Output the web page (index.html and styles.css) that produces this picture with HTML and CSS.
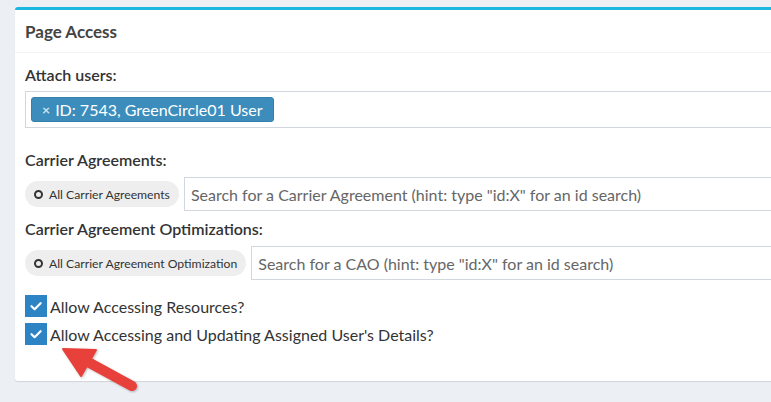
FILE: index.html
```html
<!DOCTYPE html>
<html>
<head>
<meta charset="utf-8">
<link rel="stylesheet" href="styles.css">
</head>
<body>
<div class="page">
  <section class="box">
    <header class="box-header"><h3 class="box-title">Page Access</h3></header>
    <div class="box-body">
      <div class="group">
        <label class="lbl">Attach users:</label>
        <div class="tagbox">
          <span class="tag"><span class="tag-x">×</span>ID: 7543, GreenCircle01 User</span>
        </div>
      </div>
      <div class="group g2">
        <label class="lbl">Carrier Agreements:</label>
        <div class="row">
          <span class="pill"><span class="ring"></span>All Carrier Agreements</span>
          <div class="search">Search for a Carrier Agreement (hint: type "id:X" for an id search)</div>
        </div>
      </div>
      <div class="group g3">
        <label class="lbl">Carrier Agreement Optimizations:</label>
        <div class="row">
          <span class="pill"><span class="ring"></span>All Carrier Agreement Optimization</span>
          <div class="search">Search for a CAO (hint: type "id:X" for an id search)</div>
        </div>
      </div>
      <div class="checks">
        <label class="check"><span class="cb"><svg viewBox="0 0 22 22" width="22" height="22"><path d="M6.5 11.2 L9.6 14.2 L15.6 8.2" fill="none" stroke="#fff" stroke-width="2.2" stroke-linecap="round" stroke-linejoin="round"/></svg></span>Allow Accessing Resources?</label>
        <label class="check"><span class="cb"><svg viewBox="0 0 22 22" width="22" height="22"><path d="M6.5 11.2 L9.6 14.2 L15.6 8.2" fill="none" stroke="#fff" stroke-width="2.2" stroke-linecap="round" stroke-linejoin="round"/></svg></span>Allow Accessing and Updating Assigned User's Details?</label>
      </div>
    </div>
  </section>
  <svg class="arrow" width="110" height="62" viewBox="50 340 110 62">
    <g fill="#e8403a" stroke="#e8403a" stroke-linejoin="round" stroke-linecap="round">
      <polygon points="63,349 96,350 81,376" stroke-width="2"/>
      <line x1="88" y1="362" x2="132" y2="386" stroke-width="10"/>
    </g>
  </svg>
</div>
</body>
</html>
```
FILE: styles.css
```css
html {
  overflow: hidden;
  background: #ecf0f5;
}
body {
  margin: 0;
  padding: 0;
  background: #ecf0f5;
  font-family: Lato, "Open Sans", sans-serif;
  color: #333;
  min-height: 402px;
}
.page {
  position: relative;
  padding: 7px 0 0 15px;
  width: 900px;
  height: 395px;
}
.box {
  background: #fff;
  border-top: 3px solid #1ab7df;
  border-radius: 3px 0 0 3px;
  box-shadow: 0 1px 1px rgba(0,0,0,0.12);
  height: 374px;
  box-sizing: border-box;
}
.box-header {
  height: 42px;
  border-bottom: 1px solid #f2f2f2;
  padding: 0 10px;
  display: flex;
  align-items: center;
}
.box-title {
  margin: 0;
  font-size: 17px;
  font-weight: 700;
  color: #444;
}
.box-body {
  padding: 13px 0 0 10px;
}
.lbl {
  display: block;
  font-size: 16px;
  line-height: 18px;
  font-weight: 600;
  color: #333;
  height: 18px;
  white-space: nowrap;
}
.tagbox {
  margin-top: 7px;
  height: 37px;
  box-sizing: border-box;
  border: 1px solid #d2d6de;
  border-right: none;
  padding: 5px 0 0 5px;
}
.tag {
  display: inline-flex;
  align-items: center;
  height: 25px;
  box-sizing: border-box;
  background: #3c8dbc;
  border: 1px solid #367fa9;
  border-radius: 3px;
  color: #fff;
  font-size: 16px;
  padding: 0 10px 0 10px;
}
.tag-x {
  color: rgba(255,255,255,0.75);
  font-weight: 700;
  font-size: 14px;
  margin-right: 5px;
}
.g2 { margin-top: 23px; }
.g3 { margin-top: 9px; }
.row {
  display: flex;
  align-items: center;
  margin-top: 8px;
  height: 34px;
}
.pill {
  display: inline-flex;
  align-items: center;
  height: 26px;
  background: #eee;
  border-radius: 13px;
  padding: 0 9px 0 9px;
  font-size: 12.2px;
  color: #333;
  white-space: nowrap;
}
.ring {
  width: 5px;
  height: 5px;
  border: 2px solid #333;
  border-radius: 50%;
  margin-right: 6px;
}
.search {
  flex: 1;
  margin-left: 5px;
  height: 34px;
  box-sizing: border-box;
  border: 1px solid #d2d6de;
  border-right: none;
  display: flex;
  align-items: center;
  padding-left: 6px;
  font-size: 16px;
  color: #666;
  white-space: nowrap;
}
.checks {
  margin-top: 15px;
  display: flex;
  flex-direction: column;
  gap: 6px;
}
.check {
  display: flex;
  align-items: center;
  font-size: 16px;
  color: #333;
  height: 22px;
}
.cb {
  width: 22px;
  height: 22px;
  background: #2d84c4;
  margin-right: 3px;
  display: block;
}
.cb svg { display: block; }
.arrow {
  position: absolute;
  left: 50px;
  top: 340px;
  z-index: 5;
  filter: drop-shadow(1px 1px 1px rgba(0,0,0,0.25));
}
```
